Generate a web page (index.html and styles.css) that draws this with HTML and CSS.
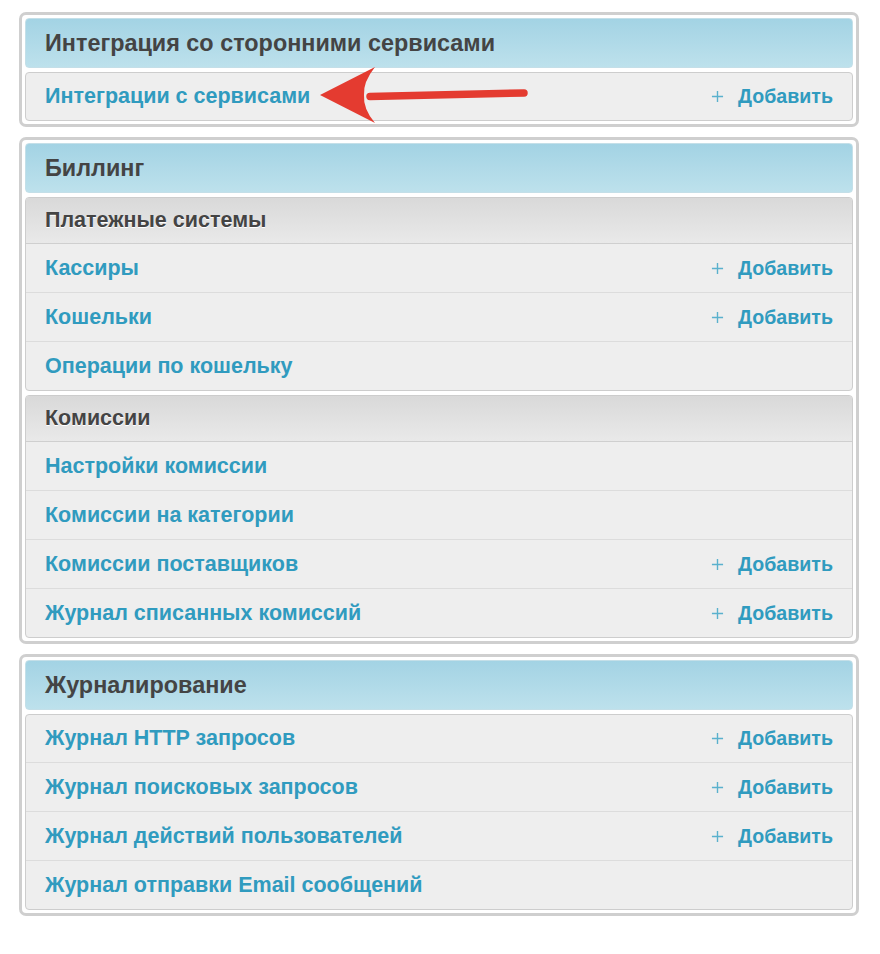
FILE: index.html
```html
<!DOCTYPE html>
<html lang="ru">
<head>
<meta charset="utf-8">
<title>Dashboard</title>
<link rel="stylesheet" href="styles.css">
</head>
<body>
<div class="page">
  <div class="stub"></div>

  <div class="module">
    <h2 class="caption">Интеграция со сторонними сервисами</h2>
    <div class="group">
      <div class="row"><a class="link" href="#">Интеграции с сервисами</a><a class="add" href="#"><svg class="plus" viewBox="0 0 14 14"><path d="M7 1v12M1 7h12"/></svg>Добавить</a></div>
    </div>
    <svg class="arrow" viewBox="0 0 220 60" width="220" height="60">
      <path d="M50 30.5 L204 27" stroke="#e43b30" stroke-width="7.5" stroke-linecap="round" fill="none"/>
      <path d="M0 29 L55 1 Q43 16 44 29 Q43 43 55 57 Z" fill="#e43b30"/>
    </svg>
  </div>

  <div class="module">
    <h2 class="caption">Биллинг</h2>
    <div class="group">
      <h3 class="subcaption">Платежные системы</h3>
      <div class="row"><a class="link" href="#">Кассиры</a><a class="add" href="#"><svg class="plus" viewBox="0 0 14 14"><path d="M7 1v12M1 7h12"/></svg>Добавить</a></div>
      <div class="row"><a class="link" href="#">Кошельки</a><a class="add" href="#"><svg class="plus" viewBox="0 0 14 14"><path d="M7 1v12M1 7h12"/></svg>Добавить</a></div>
      <div class="row"><a class="link" href="#">Операции по кошельку</a></div>
    </div>
    <div class="group">
      <h3 class="subcaption">Комиссии</h3>
      <div class="row"><a class="link" href="#">Настройки комиссии</a></div>
      <div class="row"><a class="link" href="#">Комиссии на категории</a></div>
      <div class="row"><a class="link" href="#">Комиссии поставщиков</a><a class="add" href="#"><svg class="plus" viewBox="0 0 14 14"><path d="M7 1v12M1 7h12"/></svg>Добавить</a></div>
      <div class="row"><a class="link" href="#">Журнал списанных комиссий</a><a class="add" href="#"><svg class="plus" viewBox="0 0 14 14"><path d="M7 1v12M1 7h12"/></svg>Добавить</a></div>
    </div>
  </div>

  <div class="module">
    <h2 class="caption">Журналирование</h2>
    <div class="group">
      <div class="row"><a class="link" href="#">Журнал HTTP запросов</a><a class="add" href="#"><svg class="plus" viewBox="0 0 14 14"><path d="M7 1v12M1 7h12"/></svg>Добавить</a></div>
      <div class="row"><a class="link" href="#">Журнал поисковых запросов</a><a class="add" href="#"><svg class="plus" viewBox="0 0 14 14"><path d="M7 1v12M1 7h12"/></svg>Добавить</a></div>
      <div class="row"><a class="link" href="#">Журнал действий пользователей</a><a class="add" href="#"><svg class="plus" viewBox="0 0 14 14"><path d="M7 1v12M1 7h12"/></svg>Добавить</a></div>
      <div class="row"><a class="link" href="#">Журнал отправки Email сообщений</a></div>
    </div>
  </div>
</div>
</body>
</html>
```

FILE: styles.css
```css
* { box-sizing: border-box; }

html, body {
  margin: 0;
  padding: 0;
  background: #fff;
}

body {
  font-family: "Liberation Sans", Arial, sans-serif;
  font-weight: bold;
  font-size: 21.5px;
  color: #444;
}

.page {
  width: 840px;
  margin-left: 19px;
  display: flex;
  flex-direction: column;
  gap: 10px;
}

.stub {
  height: 12px;
  margin-top: -12px;
  margin-bottom: 2px;
  border: 3px solid #cfcfcf;
  border-top: 0;
  border-radius: 0 0 7px 7px;
}

.module {
  position: relative;
  border: 3px solid #cfcfcf;
  border-radius: 7px;
  padding: 3px;
  display: flex;
  flex-direction: column;
  gap: 4px;
  background: #fff;
}

.caption {
  margin: 0;
  height: 50px;
  padding: 0 19px;
  display: flex;
  align-items: center;
  font-size: 23.4px;
  font-weight: bold;
  color: #444;
  border: 1px solid #c4dfe8;
  border-radius: 4px;
  background: linear-gradient(#a3d3e4, #bde1ec);
}

.group {
  border: 1px solid #cdcdcd;
  border-radius: 4px;
  background: #eee;
  overflow: hidden;
}

.subcaption {
  margin: 0;
  height: 46px;
  padding: 0 19px;
  display: flex;
  align-items: center;
  font-size: 21.5px;
  font-weight: bold;
  color: #444;
  text-shadow: 0 1px 0 #fff;
  background: linear-gradient(#d9d9d9, #e9e9e9);
  border-bottom: 1px solid #cfcfcf;
}

.row {
  height: 48px;
  padding: 0 19px;
  display: flex;
  align-items: center;
  justify-content: space-between;
}

.group > .row:first-child {
  height: 47px;
}

.row + .row {
  height: 49px;
  border-top: 1px solid #dcdcdc;
}

.link, .add {
  color: #309bbf;
  text-decoration: none;
}

.add {
  display: flex;
  align-items: center;
  font-size: 19.6px;
}

.plus {
  width: 13px;
  height: 13px;
  margin-right: 14px;
  stroke: #5ab1cd;
  stroke-width: 1.5;
  fill: none;
}

.arrow {
  position: absolute;
  left: 298px;
  top: 51px;
}
```
